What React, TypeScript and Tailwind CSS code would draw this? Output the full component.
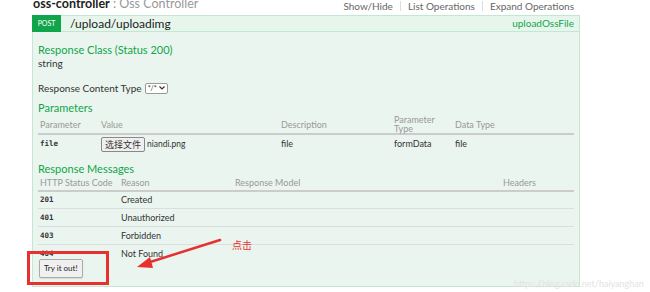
import React from 'react';

const paramCols = ['w-[61px]', 'w-[180px]', 'w-[113px]', 'w-[61px]', 'w-[121px]'];

const messages = [
  { code: '201', reason: 'Created' },
  { code: '401', reason: 'Unauthorized' },
  { code: '403', reason: 'Forbidden' },
  { code: '404', reason: 'Not Found' },
];

export default function App() {
  return (
    <div className="relative w-[650px] h-[292px] overflow-hidden bg-white font-['Lato',sans-serif] text-[#333]">
      {/* resource heading */}
      <div className="flex items-center justify-between h-[12px] pl-[33px] pr-[76px]">
        <h2 className="text-[12.5px] leading-none -mt-[3px]">
          <span className="font-bold text-[#222]">oss-controller</span>
          <span className="text-[#999]"> : Oss Controller</span>
        </h2>
        <ul className="flex items-center text-[10px] leading-none text-[#666]">
          <li className="pr-[7px] border-r border-[#ddd]">Show/Hide</li>
          <li className="px-[7px] border-r border-[#ddd]">List Operations</li>
          <li className="pl-[7px]">Expand Operations</li>
        </ul>
      </div>

      {/* operation */}
      <div className="mt-[3px] ml-[32px] w-[548px]">
        <div className="flex items-center h-[17px] bg-[#e7f6ec] border border-[#c3e8d1]">
          <span className="flex items-center justify-center w-[29px] h-[17px] -my-px -ml-px bg-[#10a54a] text-white text-[7px] uppercase">
            post
          </span>
          <span className="ml-[9px] text-[12px] text-[#222]">/upload/uploadimg</span>
          <span className="ml-auto mr-[5px] text-[10px] text-[#10a54a]">uploadOssFile</span>
        </div>

        <div className="h-[255px] bg-[#ebf5f0] border border-t-0 border-[#c3e8d1] px-[5px] pt-[11px]">
          <h4 className="text-[11px] leading-[14px] text-[#10a54a]">Response Class (Status 200)</h4>
          <div className="text-[10px] leading-[13px]">string</div>

          <div className="flex items-center mt-[11px] text-[10px] leading-[14px]">
            <span>Response Content Type</span>
            <span className="ml-[3px] flex items-center gap-[2px] h-[11px] px-[2px] bg-white border border-[#999] rounded-[2px] text-[7px] leading-none">
              */*
              <svg width="6" height="4" viewBox="0 0 6 4">
                <path d="M0.5 0.5 L3 3 L5.5 0.5" fill="none" stroke="#333" strokeWidth="1.2" />
              </svg>
            </span>
          </div>

          <h4 className="mt-[6px] text-[11px] leading-[14px] text-[#10a54a]">Parameters</h4>
          <table className="w-[536px] table-fixed border-collapse text-[9px]">
            <thead>
              <tr className="border-b-2 border-[#ccc] text-[#999] h-[19px]">
                {['Parameter', 'Value', 'Description', 'Parameter Type', 'Data Type'].map((h, i) => (
                  <th key={h} className={`${paramCols[i]} px-[2px] font-normal text-left align-middle leading-[9px]`}>
                    {h === 'Parameter Type' ? (
                      <span className="block w-[40px]">Parameter Type</span>
                    ) : (
                      h
                    )}
                  </th>
                ))}
              </tr>
            </thead>
            <tbody>
              <tr className="h-[19px]">
                <td className="px-[2px] font-['DejaVu_Sans_Mono',monospace] text-[7.5px] font-bold">file</td>
                <td className="px-[2px]">
                  <span className="inline-flex items-center">
                    <span className="inline-block px-[3px] py-[1px] bg-[#efefef] border border-[#888] rounded-[2px] text-[9px] leading-[11px] font-['Noto_Sans_CJK_SC',sans-serif]">
                      选择文件
                    </span>
                    <span className="ml-[2px] text-[8.5px]">niandi.png</span>
                  </span>
                </td>
                <td className="px-[2px]">file</td>
                <td className="px-[2px]">formData</td>
                <td className="px-[2px]">file</td>
              </tr>
            </tbody>
          </table>

          <h4 className="mt-[9px] text-[11px] leading-[14px] text-[#10a54a]">Response Messages</h4>
          <table className="w-[536px] table-fixed border-collapse text-[9px]">
            <thead>
              <tr className="border-b-2 border-[#ccc] text-[#999] h-[14px]">
                <th className="w-[81px] px-[2px] font-normal text-left">HTTP Status Code</th>
                <th className="w-[114px] px-[2px] font-normal text-left">Reason</th>
                <th className="w-[268px] px-[2px] font-normal text-left">Response Model</th>
                <th className="px-[2px] font-normal text-left">Headers</th>
              </tr>
            </thead>
            <tbody>
              {messages.map((m, i) => (
                <tr key={m.code} className={`h-[18px] ${i < 3 ? 'border-b border-[#ddd]' : ''}`}>
                  <td className="px-[2px] font-['DejaVu_Sans_Mono',monospace] text-[7.5px] font-bold">{m.code}</td>
                  <td className="px-[2px]">{m.reason}</td>
                  <td />
                  <td />
                </tr>
              ))}
            </tbody>
          </table>

          <button className="relative block -mt-[4px] ml-px h-[19px] px-[4px] bg-[#f0f0f0] border border-[#aaa] rounded-[2px] text-[8px] text-[#222] shadow-[0_1px_1px_rgba(0,0,0,0.1)]">
            Try it out!
          </button>
        </div>
      </div>

      {/* annotation: red box, arrow, label */}
      <div className="absolute left-[27px] top-[251px] w-[82px] h-[34px] border-[3px] border-[#e8312f]" />
      <svg className="absolute left-0 top-0" width="650" height="292" viewBox="0 0 650 292">
        <path d="M220 240 L147 263" stroke="#e8312f" strokeWidth="2.5" strokeLinecap="round" />
        <path d="M137 267 L150 257 L153 268 Z" fill="#e8312f" />
      </svg>
      <span className="absolute left-[232px] top-[240px] text-[10px] leading-none text-[#e8312f] font-['Noto_Sans_CJK_SC',sans-serif]">
        点击
      </span>
      <span className="absolute left-[514px] top-[279px] text-[9px] leading-none text-[#e3e3e3]">
        https://blog.csdn.net/haiyanghan
      </span>
    </div>
  );
}
